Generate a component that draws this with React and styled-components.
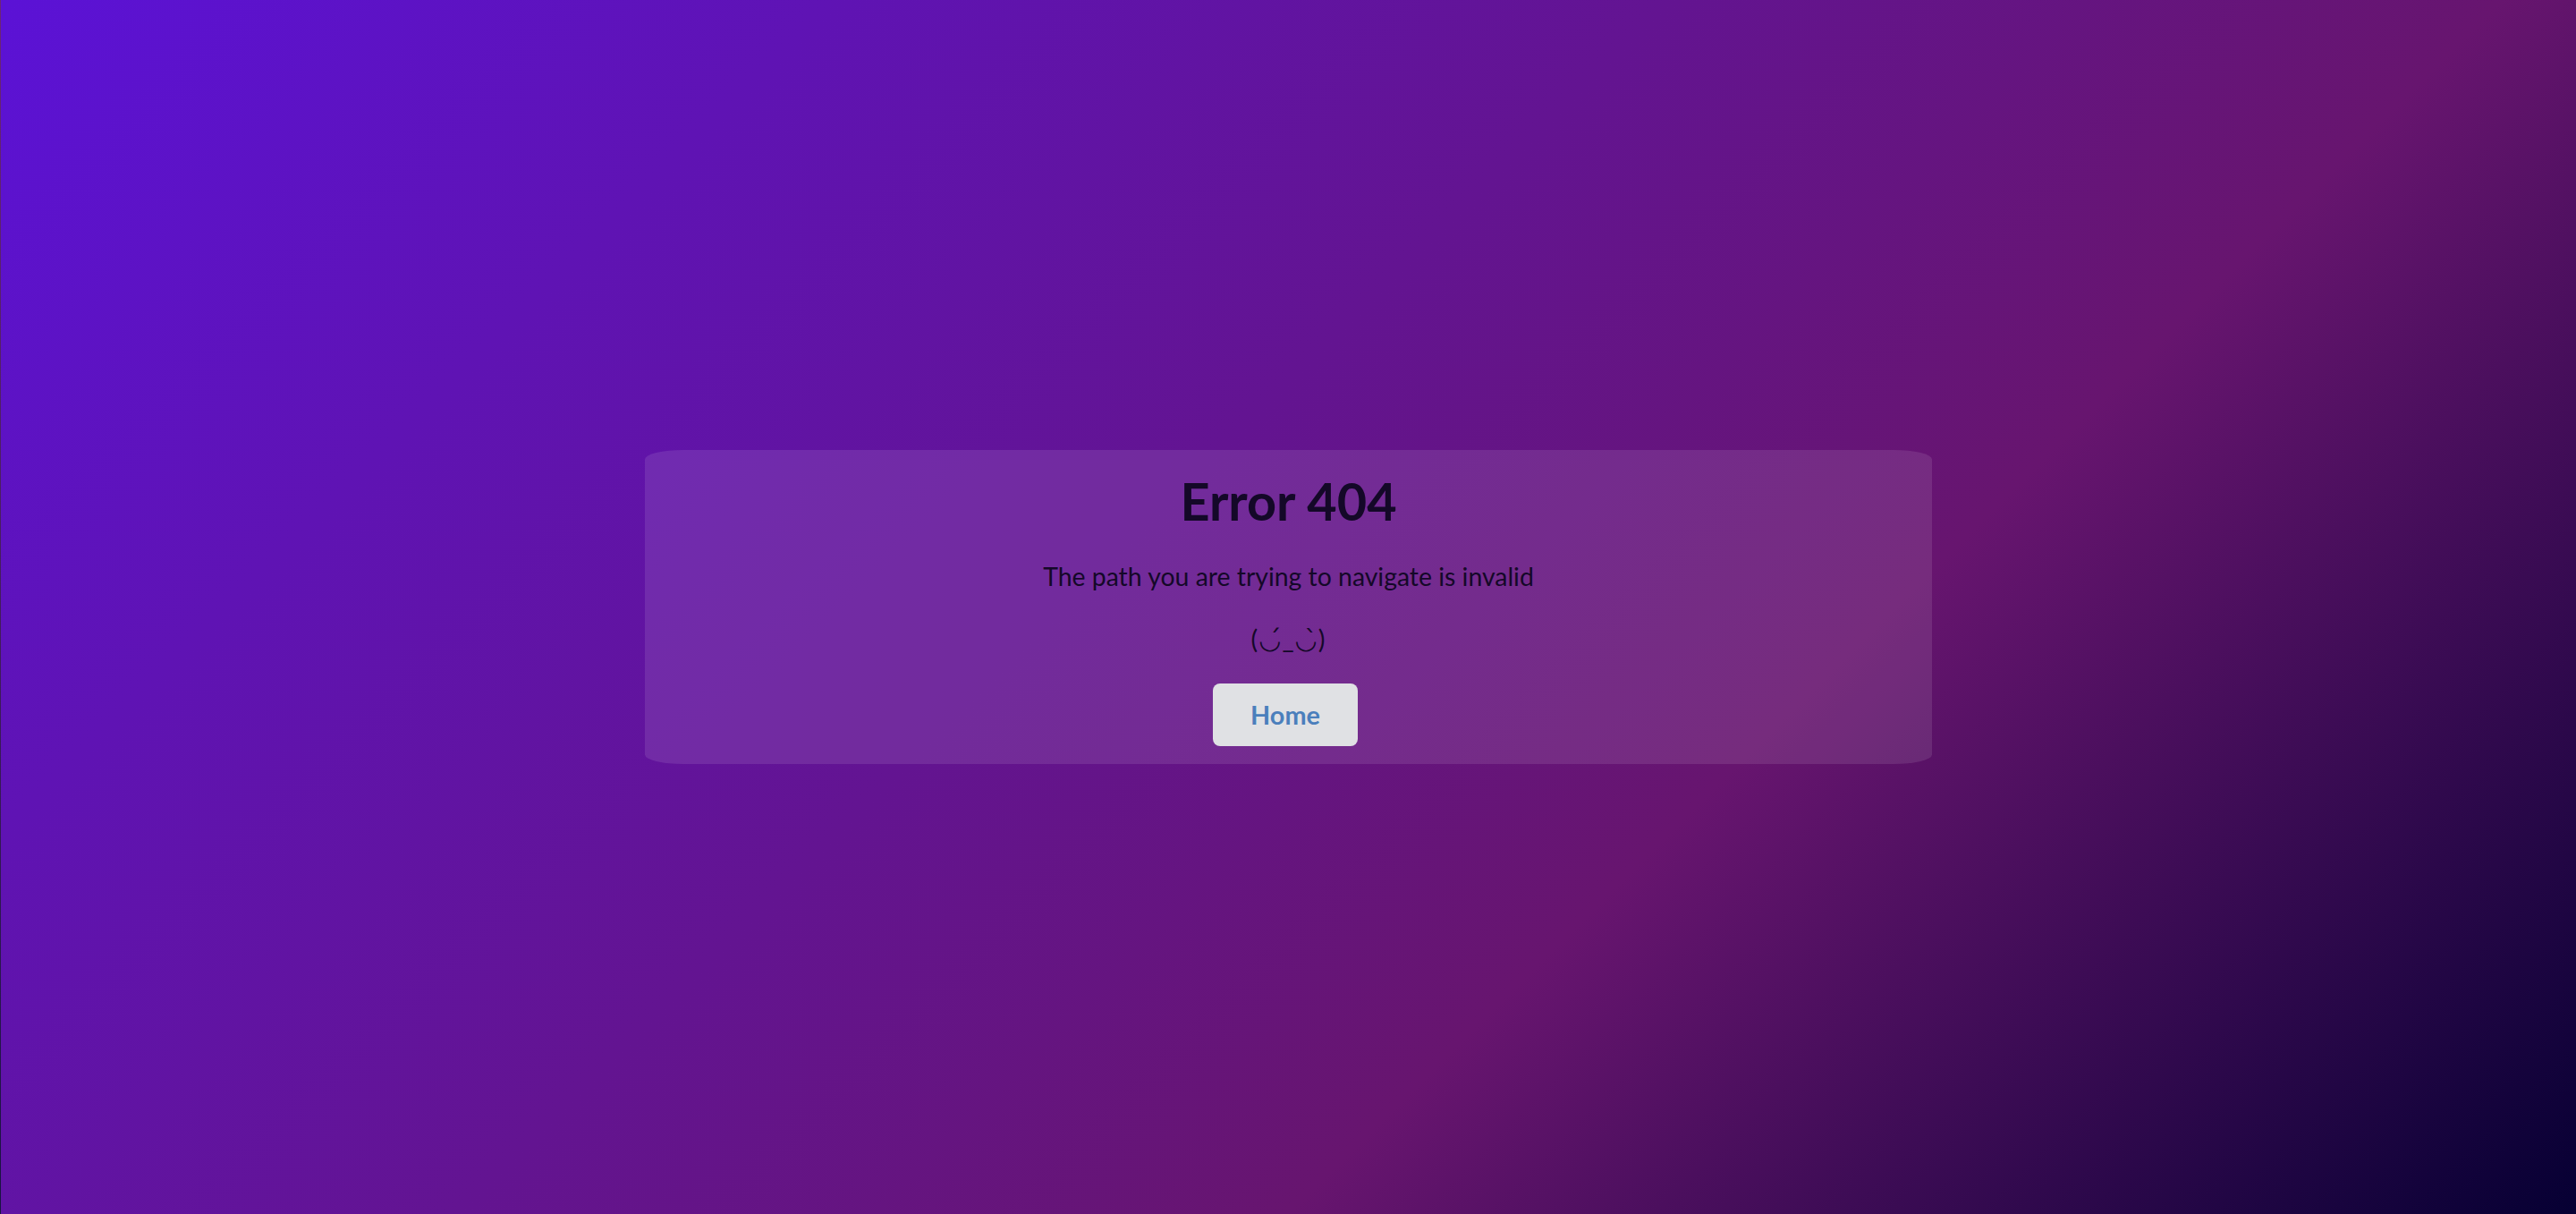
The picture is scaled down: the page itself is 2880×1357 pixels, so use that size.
import React from 'react'
import styled, { createGlobalStyle } from 'styled-components'

const GlobalStyle = createGlobalStyle`
  html, body {
    margin: 0;
    padding: 0;
    height: 100%;
  }
  body {
    font-family: Lato, "Noto Sans", "DejaVu Sans", sans-serif;
  }
  #root {
    height: 100%;
  }
`

const Page = styled.main`
  box-sizing: border-box;
  height: 100vh;
  display: flex;
  align-items: center;
  justify-content: center;
  background: linear-gradient(135deg, #5b12d6 0%, #67156f 66%, #060033 100%);
  border-left: 1px solid rgba(255, 255, 255, 0.08);
`

const Card = styled.section`
  width: 50%;
  box-sizing: border-box;
  padding: 22px 0 20px;
  display: flex;
  flex-direction: column;
  align-items: center;
  background: rgba(255, 255, 255, 0.1);
  border-radius: 3%;
  color: #140828;
`

const Title = styled.h1`
  margin: 0;
  font-size: 57.6px;
  font-weight: 700;
  line-height: 1.2;
`

const Text = styled.p`
  margin: ${(p) => p.$top}px 0 0;
  font-size: ${(p) => p.$size || 28.8}px;
  line-height: 1.2;
  letter-spacing: ${(p) => p.$spacing || 0}px;
`

const HomeButton = styled.button`
  margin: 32px 7px 0 0;
  padding: 18px 42px;
  border: none;
  border-radius: 8px;
  background: #e0e1e4;
  color: #4b7fbc;
  font-family: inherit;
  font-size: 28.8px;
  font-weight: 700;
  line-height: 1.2;
  cursor: pointer;
`

export default function App() {
  return (
    <>
      <GlobalStyle />
      <Page>
        <Card>
          <Title>Error 404</Title>
          <Text $top={33} $size={28.4}>The path you are trying to navigate is invalid</Text>
          <Text $top={36} $spacing={1}>(◡́_◡̀)</Text>
          <HomeButton>Home</HomeButton>
        </Card>
      </Page>
    </>
  )
}
